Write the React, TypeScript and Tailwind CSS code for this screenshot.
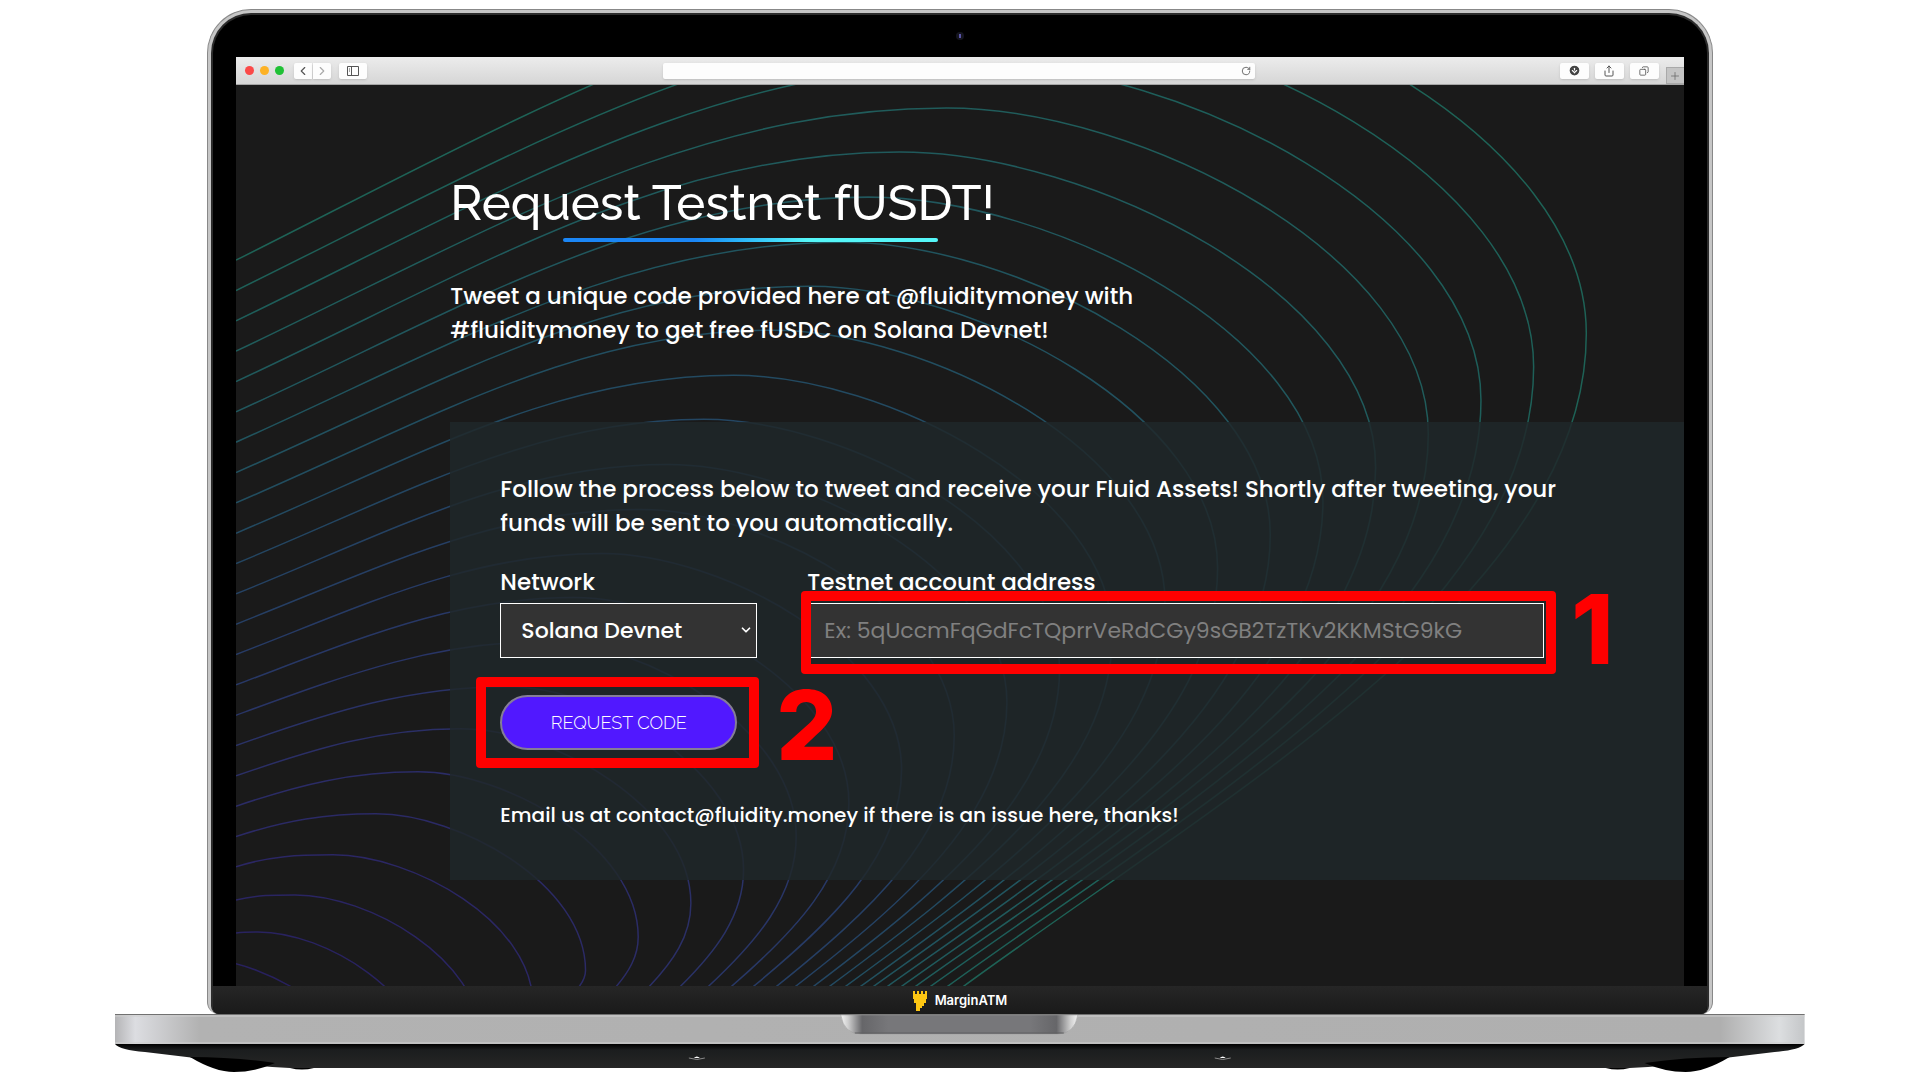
import {
	ArrowDownCircle,
	ChevronDown,
	ChevronLeft,
	ChevronRight,
	Copy,
	Plus,
	RotateCw,
	Share,
} from "lucide-react";
import type { ReactNode } from "react";

// [peakX, peakY, bottomX, color] for every contour, from the outermost one in
const contours: [number, number, number, string][] = [
	[1060, -26, 963, "#1e6256"],
	[1020, 20, 947, "#1e6058"],
	[980, 64, 930, "#1e5e5a"],
	[947, 108, 915, "#205c5b"],
	[900, 152, 901, "#205a5c"],
	[869, 197, 887, "#21575d"],
	[843, 242, 873, "#21545e"],
	[810, 286, 860, "#22515f"],
	[772, 330, 845, "#224e60"],
	[734, 375, 829, "#234a61"],
	[704, 419, 813, "#244662"],
	[668, 464, 795, "#254263"],
	[640, 509, 776, "#263f64"],
	[602, 553, 753, "#273b65"],
	[574, 597, 731, "#283866"],
	[546, 641, 708, "#293566"],
	[508, 686, 680, "#2a3266"],
	[461, 728, 649, "#2b2f66"],
	[418, 771, 616, "#2b2c66"],
	[376, 813, 579, "#2b2a65"],
	[333, 854, 534, "#2b2764"],
	[295, 894, 477, "#2a2562"],
	[258, 931, 403, "#292360"],
	[200, 958, 302, "#28215e"],
];

function contourPath(i: number) {
	const [px, py, bx] = contours[i];
	const ly = 260 + i * 30.3 + Math.max(0, i - 20) * 2.7;
	const rx = 1587 - i * 52.7;
	const ry = 333 + i * 33.5;
	const lw = px - 236;
	const w = rx - px;
	const h = ry - py;
	let d = `M${px} ${py}`;
	if (lw > 0) {
		const c = lw * 0.36;
		const cy = Math.max(py, ly - c * (0.5 - i * 0.009));
		d = `M236 ${ly}C${236 + c} ${cy} ${px - c} ${py} ${px} ${py}`;
	}
	d += `C${px + w * 0.4} ${py} ${rx} ${ry - h * 0.55} ${rx} ${ry}`;
	if (ry < 985) {
		const bw = rx - bx;
		const bh = 986 - ry;
		d += `C${rx} ${ry + bh * 0.394} ${bx + bw * (0.43 + i * 0.008)} ${986 - bh * 0.3} ${bx} 986`;
	}
	return d;
}

const Contours = () => (
	<svg
		className="absolute inset-0 h-full w-full"
		viewBox="236 85 1448 900"
		preserveAspectRatio="none"
		fill="none"
		strokeWidth="1.5"
		aria-hidden="true"
	>
		{contours.map((c, i) => (
			<path key={i} d={contourPath(i)} stroke={c[3]} />
		))}
	</svg>
);

const BarButton = ({ label, className, children }: { label: string; className: string; children: ReactNode }) => (
	<button
		type="button"
		aria-label={label}
		className={`flex h-4 items-center justify-center bg-[#fdfdfd] text-[#555] shadow-sm ${className}`}
	>
		{children}
	</button>
);

const BrowserBar = () => (
	<div className="flex h-7 items-center border-b border-[#a5a5a5] bg-linear-to-b from-[#ececec] to-[#d6d6d6] pl-[9px]">
		<div className="flex gap-1.5">
			<span className="size-[9px] rounded-full bg-[#fb4948]" />
			<span className="size-[9px] rounded-full bg-[#fdb225]" />
			<span className="size-[9px] rounded-full bg-[#1fc135]" />
		</div>
		<div className="ml-[10px] flex gap-px">
			<BarButton label="Back" className="w-[18px] rounded-l-xs">
				<ChevronLeft size={14} />
			</BarButton>
			<BarButton label="Forward" className="w-[18px] rounded-r-xs text-[#aaa]">
				<ChevronRight size={14} />
			</BarButton>
		</div>
		<BarButton label="Sidebar" className="ml-2 w-7 rounded-xs">
			<svg width="12" height="10" viewBox="0 0 12 10" fill="none" stroke="currentColor" aria-hidden="true">
				<path d="M.5 .5h11v9H.5zM4.5 .5v9M2 3h1M2 5h1" />
			</svg>
		</BarButton>
		<div className="flex flex-1 justify-center pr-2">
			<div className="flex h-4 w-[592px] items-center rounded-xs bg-[#fdfdfd] pr-1 shadow-sm">
				<input aria-label="Address" className="h-4 min-w-0 flex-1 bg-transparent outline-none" />
				<RotateCw size={10} className="text-[#555]" />
			</div>
		</div>
		<div className="flex gap-[6px]">
			<BarButton label="Downloads" className="w-[29px] rounded-xs">
				<ArrowDownCircle size={13} fill="#444" stroke="#fff" />
			</BarButton>
			<BarButton label="Share" className="w-[29px] rounded-xs">
				<Share size={12} strokeWidth={2} />
			</BarButton>
			<BarButton label="Tabs" className="w-[29px] rounded-xs">
				<Copy size={10} strokeWidth={2} className="-scale-x-100" />
			</BarButton>
		</div>
		<button
			type="button"
			aria-label="New tab"
			className="ml-[7px] flex h-[17px] w-[18px] items-center justify-center self-end border border-r-0 border-[#a9a9a9] bg-[#c4c4c4] text-[#666]"
		>
			<Plus size={12} strokeWidth={1.5} />
		</button>
	</div>
);

const Marker = ({ className }: { className: string }) => (
	<span className={`pointer-events-none absolute rounded-sm border-10 border-[#ff0000] ${className}`} />
);

const Step = ({ className, children }: { className: string; children: ReactNode }) => (
	<span
		className={`pointer-events-none absolute font-[Inter,sans-serif] text-[96px] leading-24 font-extrabold text-[#ff0000] ${className}`}
	>
		{children}
	</span>
);

const RequestForm = () => (
	<form
		className="mt-[75px] bg-[#20282a]/85 px-[50px] pt-[50px] pb-12"
		onSubmit={(e) => e.preventDefault()}
	>
		<p className="max-w-[1060px] text-[23px] leading-[34px]">
			Follow the process below to tweet and receive your Fluid Assets! Shortly after tweeting, your funds will
			be sent to you automatically.
		</p>
		<div className="mt-[25px] flex gap-[50px]">
			<div className="flex w-[257px] flex-col">
				<label htmlFor="network" className="text-[23px] leading-[34px]">
					Network
				</label>
				<div className="relative mt-1">
					<select
						id="network"
						className="h-[55px] w-full appearance-none border border-white bg-[#333] pl-5 text-[22px]"
					>
						<option>Solana Devnet</option>
					</select>
					<ChevronDown size={14} strokeWidth={3} className="pointer-events-none absolute top-5 right-1" />
				</div>
			</div>
			<div className="flex w-[737px] flex-col">
				<label htmlFor="address" className="text-[23px] leading-[34px]">
					Testnet account address
				</label>
				<div className="relative mt-1">
					<input
						id="address"
						placeholder="Ex: 5qUccmFqGdFcTQprrVeRdCGy9sGB2TzTKv2KKMStG9kG"
						className="h-[55px] w-full border border-white bg-[#333] px-4 text-[22px] font-normal outline-none placeholder:text-[#808080]"
					/>
					<Marker className="-top-3 -right-3 -bottom-4 -left-1.5" />
					<Step className="-top-[22px] left-[764px]">1</Step>
				</div>
			</div>
		</div>
		<div className="relative mt-[37px] w-[237px]">
			<button
				type="submit"
				className="h-[55px] w-full rounded-full border-2 border-[#857d97] bg-[#5118ff] font-[Raleway,Lato,sans-serif] text-lg font-light"
			>
				REQUEST CODE
			</button>
			<Marker className="-top-[18px] -right-[22px] -bottom-[18px] -left-6" />
			<Step className="-top-[18px] left-[276px]">2</Step>
		</div>
		<p className="mt-12 text-[20px] leading-[34px]">
			Email us at contact@fluidity.money if there is an issue here, thanks!
		</p>
	</form>
);

const Brand = () => (
	<div className="flex h-7 items-center justify-center gap-2 bg-linear-to-b from-[#262626] to-[#1a1a1a] pt-0.5">
		<svg width="14" height="20" viewBox="0 0 14 20" fill="#fdc613" shapeRendering="crispEdges" aria-hidden="true">
			<path d="M0 0h2v3h2V0h2v3h2V0h2v3h2V0h2v8h-1v4h-2v3H9v2H7v3H3v-8H1V8H0z" />
		</svg>
		<span className="text-[13px] font-semibold text-white">MarginATM</span>
	</div>
);

const Lid = () => (
	<div className="w-[78.4%] rounded-t-[44px] rounded-b-xl border border-b-0 border-[#888] bg-[#c6c6c6] px-[3px] pt-[3px]">
		<div className="overflow-hidden rounded-t-[40px] rounded-b-lg border-2 border-b-0 border-[#2c2c2c] bg-black">
			<div className="flex h-8 items-center justify-center">
				<span className="mt-2.5 flex size-2 items-center justify-center rounded-full bg-[#15151f]">
					<span className="h-1 w-0.5 bg-[#5a55a8]" />
				</span>
			</div>
			<div className="mx-[23px] pt-[10px]">
				<BrowserBar />
				<main className="relative overflow-hidden bg-[#1a1a1a] pb-[106px] pl-[214px] font-[Poppins,Inter,sans-serif] font-medium text-white">
					<Contours />
					<div className="relative pt-[84px]">
						<h1 className="font-[Raleway,Lato,sans-serif] text-[49px] leading-[68px] font-medium">
							Request Testnet fUSDT!
						</h1>
						<div className="mt-px ml-[113px] h-1 w-[375px] rounded-full bg-linear-to-r from-[#1b86f5] from-35% to-[#55f6f8] to-65%" />
						<p className="mt-[37px] max-w-[720px] text-[23px] leading-[34px]">
							Tweet a unique code provided here at @fluiditymoney with #fluiditymoney to get free fUSDC on
							Solana Devnet!
						</p>
						<RequestForm />
					</div>
				</main>
			</div>
			<Brand />
		</div>
	</div>
);

const Base = () => (
	<svg className="h-[60px] w-[88%]" viewBox="0 0 1690 60" preserveAspectRatio="none" aria-hidden="true">
		<defs>
			<linearGradient id="metal">
				<stop offset="0" stopColor="#b4b4b6" />
				<stop offset=".012" stopColor="#dcdde1" />
				<stop offset=".05" stopColor="#b2b2b2" />
				<stop offset=".95" stopColor="#afafaf" />
				<stop offset=".985" stopColor="#dcdee0" />
				<stop offset="1" stopColor="#c4c6c8" />
			</linearGradient>
			<linearGradient id="under" x2="0" y2="1">
				<stop offset="0" stopColor="#000" />
				<stop offset=".25" stopColor="#1b1d1e" />
				<stop offset="1" stopColor="#262626" />
			</linearGradient>
			<linearGradient id="notch">
				<stop offset="0" stopColor="#f4f4f4" />
				<stop offset=".03" stopColor="#d0d0d0" />
				<stop offset=".09" stopColor="#666669" />
				<stop offset=".2" stopColor="#77777a" />
				<stop offset=".8" stopColor="#77777a" />
				<stop offset=".91" stopColor="#666669" />
				<stop offset=".97" stopColor="#d0d0d0" />
				<stop offset="1" stopColor="#f4f4f4" />
			</linearGradient>
		</defs>
		<path d="M0 30H1690Q1685 36 1660 38L1610 44Q1560 52 1515 54H175Q130 52 80 44L30 38Q5 36 0 30Z" fill="url(#under)" />
		<path
			d="M75 43Q100 58 119 58Q140 58 160 49Q120 43 75 43ZM1615 43Q1590 58 1571 58Q1550 58 1530 49Q1570 43 1615 43ZM175 54h24q-12 3-24 0ZM1491 54h24q-12 3-24 0Z"
			fill="#000"
		/>
		<path d="M574 44q8 3 16 0M1100 44q8 3 16 0" stroke="#8a8a8a" fill="none" />
		<path d="M579 44q3-3 6 0zM1105 44q3-3 6 0z" fill="#fff" />
		<rect width="1690" height="30" fill="url(#metal)" />
		<path d="M0 .5H1690" stroke="#707070" />
		<path d="M0 2H1690M0 29H1690" stroke="#cfcfcf" />
		<path d="M726 1H963Q960 20 943 20H746Q729 20 726 1Z" fill="url(#notch)" stroke="#999" strokeWidth=".5" />
		<path d="M740 19H949" stroke="#606063" />
	</svg>
);

export default function App() {
	return (
		<div className="flex min-h-screen flex-col items-center bg-white pt-[9px] font-[Inter,sans-serif]">
			<Lid />
			<Base />
		</div>
	);
}
